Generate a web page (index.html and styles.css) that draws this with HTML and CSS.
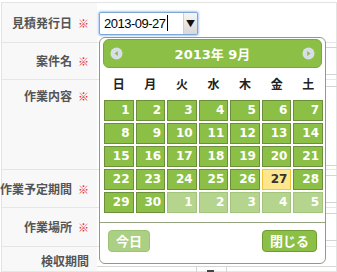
FILE: index.html
```html
<!DOCTYPE html>
<html lang="ja">
<head>
    <meta charset="UTF-8">
    <meta name="viewport" content="width=device-width, initial-scale=1.0">
    <title>見積書</title>
    <link rel="stylesheet" href="styles.css">
</head>
<body>

<div class="form">
    <div class="row r1">
        <div class="label">見積発行日<span class="req">※</span></div>
        <div class="value">
            <div class="date-input">
                <span class="date-text">2013-09-27</span><span class="caret"></span>
                <span class="drop">▼</span>
            </div>
        </div>
    </div>
    <div class="row r2">
        <div class="label">案件名<span class="req">※</span></div>
        <div class="value"><div class="text-input"></div></div>
    </div>
    <div class="row r3">
        <div class="label">作業内容<span class="req">※</span></div>
        <div class="value"><div class="textarea"></div></div>
    </div>
    <div class="row r4">
        <div class="label">作業予定期間<span class="req">※</span></div>
        <div class="value"><div class="text-input"></div></div>
    </div>
    <div class="row r5">
        <div class="label">作業場所<span class="req">※</span></div>
        <div class="value"><div class="text-input"></div></div>
    </div>
    <div class="row r6">
        <div class="label">検収期間</div>
        <div class="value">
            <div class="range">
                <div class="range-cell"></div>
                <div class="range-sep"></div>
                <div class="range-cell wide"></div>
            </div>
        </div>
    </div>
</div>

<!-- datepicker popup, open over the form -->
<div class="picker">
    <div class="cal-head">
        <svg class="nav" width="13" height="13" viewBox="0 0 13 13">
            <circle cx="6.5" cy="6.5" r="6" fill="#d7deea"/>
            <polygon points="4.5,6.5 7.8,4 7.8,9" fill="#8cbf45"/>
        </svg>
        <span class="cal-title">2013年 9月</span>
        <svg class="nav" width="13" height="13" viewBox="0 0 13 13">
            <circle cx="6.5" cy="6.5" r="6" fill="#d7deea"/>
            <polygon points="8.5,6.5 5.2,4 5.2,9" fill="#8cbf45"/>
        </svg>
    </div>

    <div class="weekdays">
        <span>日</span><span>月</span><span>火</span><span>水</span><span>木</span><span>金</span><span>土</span>
    </div>

    <div class="days">
        <span class="day">1</span><span class="day">2</span><span class="day">3</span><span class="day">4</span><span class="day">5</span><span class="day">6</span><span class="day">7</span>
        <span class="day">8</span><span class="day">9</span><span class="day">10</span><span class="day">11</span><span class="day">12</span><span class="day">13</span><span class="day">14</span>
        <span class="day">15</span><span class="day">16</span><span class="day">17</span><span class="day">18</span><span class="day">19</span><span class="day">20</span><span class="day">21</span>
        <span class="day">22</span><span class="day">23</span><span class="day">24</span><span class="day">25</span><span class="day">26</span><span class="day today">27</span><span class="day">28</span>
        <span class="day">29</span><span class="day">30</span><span class="day other">1</span><span class="day other">2</span><span class="day other">3</span><span class="day other">4</span><span class="day other">5</span>
    </div>

    <div class="cal-foot">
        <button type="button" class="btn disabled">今日</button>
        <button type="button" class="btn close">閉じる</button>
    </div>
</div>

</body>
</html>
```

FILE: styles.css
```css
body {
    margin: 0;
    padding-top: 2px;
    width: 337px;
    height: 272px;
    box-sizing: border-box;
    overflow: hidden;
    position: relative;
    background-color: #fff;
    font-family: "Noto Sans CJK JP", sans-serif;
}

.form {
    margin-left: 1px;
    width: 334px;
    border: 1px solid #e3e3e3;
    border-bottom: none;
}

.row {
    display: flex;
    box-sizing: border-box;
    border-bottom: 1px solid #e6e6e6;
}

.r1 { height: 40px; }
.r2 { height: 37px; }
.r3 { height: 90px; }
.r4 { height: 38px; }
.r5 { height: 39px; }
.r6 { height: 25px; }

.label {
    width: 95px;
    flex: none;
    box-sizing: border-box;
    padding-right: 8px;
    background-color: #f8f8f8;
    display: flex;
    align-items: center;
    justify-content: flex-end;
    white-space: nowrap;
    font-size: 12px;
    font-weight: bold;
    color: #555;
    line-height: 16px;
}

.r3 .label {
    align-items: flex-start;
    padding-top: 8px;
}

.r6 .label {
    align-items: flex-start;
    padding-top: 6px;
}

.req {
    margin-left: 6px;
    font-size: 11px;
    color: #e02a2a;
}

.value {
    flex: 1;
    padding-left: 2px;
    display: flex;
    align-items: center;
}

.date-input {
    width: 99px;
    height: 23px;
    box-sizing: border-box;
    margin-top: 1px;
    border: 1px solid #7ea7d8;
    border-radius: 2px;
    box-shadow: 0 0 2px 1px rgba(110, 160, 230, 0.55);
    display: flex;
    align-items: center;
    background-color: #fff;
}

.date-text {
    padding-left: 4px;
    font-family: "Liberation Sans", Arial, sans-serif;
    font-size: 13px;
    letter-spacing: -0.5px;
    color: #000;
}

.caret {
    width: 1px;
    height: 16px;
    margin-left: 1px;
    background-color: #000;
}

.drop {
    margin-left: auto;
    width: 13px;
    height: 21px;
    border-left: 1px solid #d0d0d0;
    background: linear-gradient(#f6f6f6, #d8d8d8);
    font-size: 9px;
    line-height: 21px;
    text-align: center;
    color: #111;
}

.text-input {
    width: 250px;
    height: 26px;
    border: 1px solid #d4d4d4;
    border-radius: 2px;
}

.r3 .value {
    align-items: flex-start;
    padding-top: 6px;
}

.textarea {
    width: 250px;
    height: 78px;
    border: 1px solid #d4d4d4;
    border-radius: 2px;
}

.r6 .value {
    align-items: flex-start;
    padding-left: 0;
}

.range {
    margin-top: 19px;
    display: flex;
    width: 100%;
    border-top: 1px solid #d6d6d6;
    height: 6px;
}

.range-cell {
    width: 99px;
    border-right: 1px solid #d6d6d6;
}

.range-cell.wide {
    flex: 1;
    border-left: 1px solid #d6d6d6;
    border-right: none;
}

.range-sep {
    width: 29px;
    position: relative;
}

/* top of the "〜" glyph peeking in at the bottom edge */
.range-sep::after {
    content: "";
    position: absolute;
    left: 10px;
    top: 3px;
    width: 7px;
    height: 2px;
    background-color: #444;
}

/* datepicker */

.picker {
    position: absolute;
    left: 99px;
    top: 37px;
    width: 227px;
    box-sizing: border-box;
    padding-bottom: 11px;
    border: 1px solid #8e9f72;
    border-radius: 6px;
    background-color: #fff;
}

.cal-head {
    margin: 1px 3px 0;
    height: 29px;
    box-sizing: border-box;
    padding: 0 6px;
    background-color: #8cbf45;
    border: 1px solid #7aa93b;
    border-radius: 6px;
    display: flex;
    align-items: center;
    justify-content: space-between;
}

.nav {
    display: block;
}

.cal-title {
    font-family: "DejaVu Sans", "Noto Sans CJK JP", sans-serif;
    font-size: 13px;
    font-weight: bold;
    color: #fff;
}

.weekdays,
.days {
    margin-left: 4px;
    width: 219px;
    display: grid;
    grid-template-columns: repeat(7, 1fr);
    column-gap: 2px;
}

.weekdays {
    height: 30px;
    align-items: center;
    text-align: center;
    font-size: 12px;
    font-weight: bold;
    color: #222;
}

.days {
    margin-top: 2px;
    row-gap: 2px;
    grid-auto-rows: 21px;
}

.day {
    box-sizing: border-box;
    padding-right: 3px;
    background-color: #8cbf45;
    border: 1px solid #6b8f3b;
    text-align: right;
    line-height: 19px;
    font-family: "DejaVu Sans", sans-serif;
    font-size: 12px;
    font-weight: bold;
    color: #fff;
}

.day.today {
    background-color: #fde68c;
    border-color: #f1c535;
    color: #333;
}

.day.other {
    background-color: #b5d58f;
    border-color: #a2c47c;
}

.cal-foot {
    margin-top: 9px;
    border-top: 1px solid #95a380;
    padding: 7px 8px 0;
    display: flex;
    justify-content: space-between;
}

.btn {
    height: 22px;
    box-sizing: border-box;
    padding: 0 7px;
    border-radius: 4px;
    font-family: "Noto Sans CJK JP", sans-serif;
    font-size: 13px;
    font-weight: bold;
    line-height: 20px;
    color: #fff;
}

.btn.disabled {
    background-color: #abd083;
    border: 1px solid #9dc476;
}

.btn.close {
    background-color: #8cbf45;
    border: 1px solid #6f9a34;
}
```
